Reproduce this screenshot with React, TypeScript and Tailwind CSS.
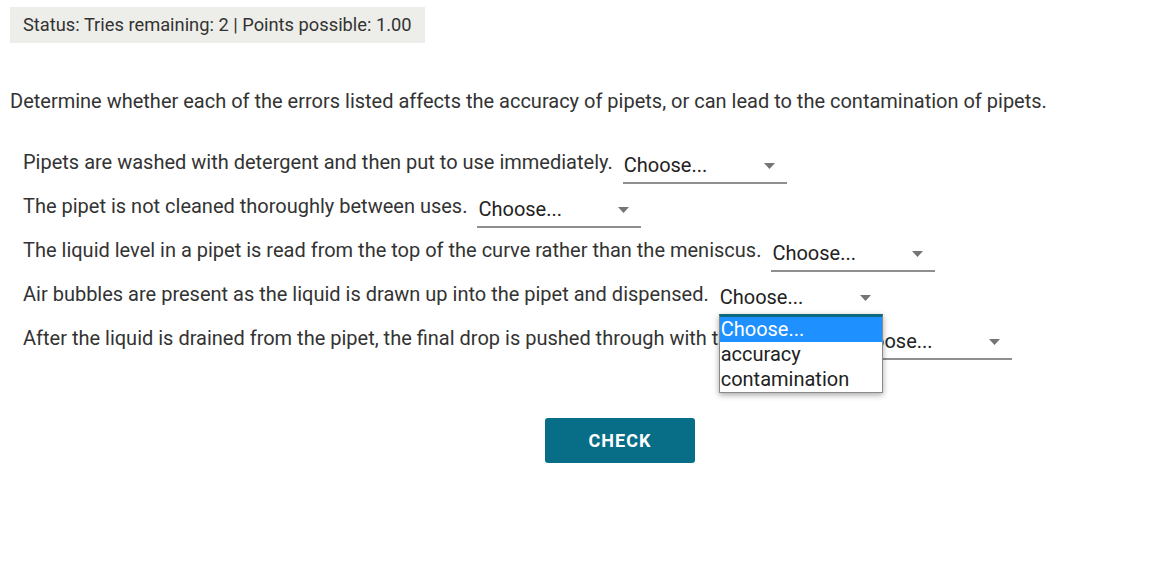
import React from 'react';

const rows = [
  'Pipets are washed with detergent and then put to use immediately.',
  'The pipet is not cleaned thoroughly between uses.',
  'The liquid level in a pipet is read from the top of the curve rather than the meniscus.',
  'Air bubbles are present as the liquid is drawn up into the pipet and dispensed.',
  'After the liquid is drained from the pipet, the final drop is pushed through with the pipet bulb.',
];

const options = ['Choose...', 'accuracy', 'contamination'];

const Select: React.FC<{ open?: boolean }> = ({ open }) => (
  <div className="relative mt-[8px] ml-[10px] h-[36px] w-[164px] shrink-0 border-b-2 border-[#8f8f8f] bg-white">
    <div className="flex h-full items-center justify-between pl-[1px] pr-[12px] text-[20px] text-[#222]">
      <span>Choose...</span>
      <svg width="11" height="6" viewBox="0 0 11 6" className="mt-[2px]">
        <path d="M0 0h11L5.5 6z" fill="#757575" />
      </svg>
    </div>
    {open && (
      <div className="absolute left-0 top-full z-10 w-full border border-[#8a8a8a] border-t-[3px] border-t-[#0b6a7e] bg-white shadow-[0_2px_6px_rgba(0,0,0,0.35)]">
        {options.map((o, i) => (
          <div
            key={o}
            className={`h-[25px] pl-[1px] text-[20px] leading-[25px] ${i === 0 ? 'bg-[#1e90ff] text-white' : 'text-[#222]'}`}
          >
            {o}
          </div>
        ))}
      </div>
    )}
  </div>
);

export default function App() {
  return (
    <div className="min-h-screen bg-white pl-[10px] pt-[7px] text-[#333] font-['Roboto','Liberation_Sans',sans-serif]">
      <div className="flex h-[36px] w-fit items-center bg-[#edeee9] px-[13px] text-[18.3px] text-[#333]">
        Status: Tries remaining: 2 | Points possible: 1.00
      </div>

      <p className="mt-[43px] text-[20px] leading-[30px]">
        Determine whether each of the errors listed affects the accuracy of pipets, or can lead to the contamination of pipets.
      </p>

      <div className="mt-[24px] pl-[13px]">
        {rows.map((r, i) => (
          <div key={i} className="flex h-[44px] items-center">
            <span className="whitespace-nowrap text-[20px] leading-[30px]">{r}</span>
            <Select open={i === 3} />
          </div>
        ))}
      </div>

      <button className="ml-[535px] mt-[58px] h-[45px] w-[150px] rounded-[3px] bg-[#086d86] text-[18px] font-bold tracking-[1px] text-white">
        CHECK
      </button>
    </div>
  );
}
